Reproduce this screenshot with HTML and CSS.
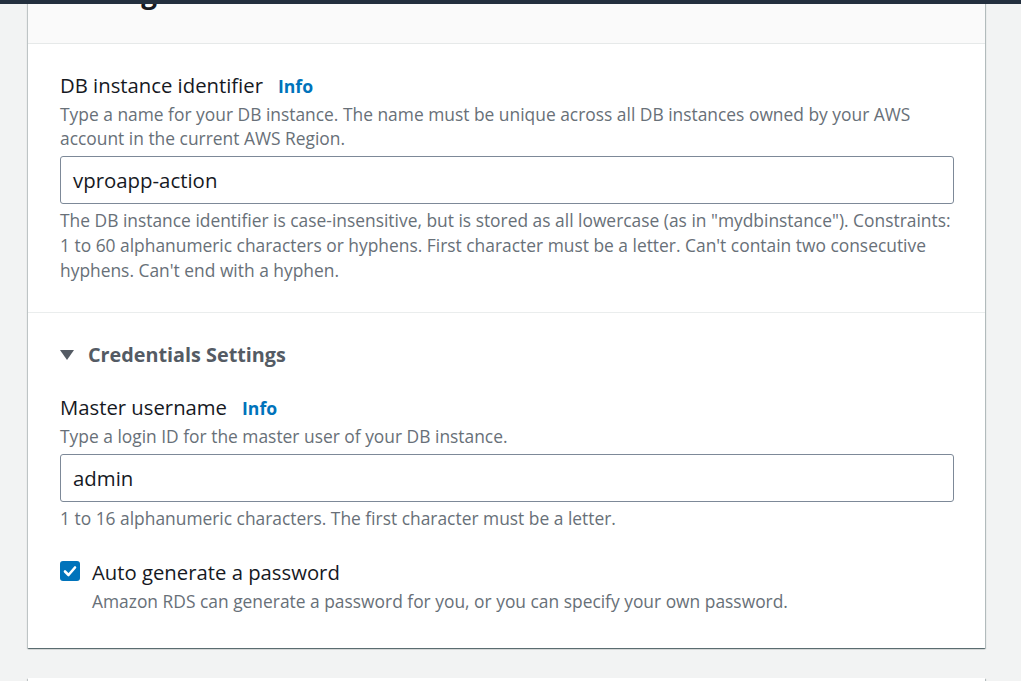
FILE: index.html
```html
<!DOCTYPE html>
<html lang="en">
<head>
<meta charset="utf-8">
<title>Settings</title>
<link rel="stylesheet" href="styles.css">
</head>
<body>
<div class="topbar"></div>
<main class="page">
  <section class="card">
    <div class="card-header">
      <h2 class="card-title">Settings</h2>
    </div>
    <div class="section">
      <div class="field">
        <div class="label-row"><span class="label">DB instance identifier</span><a class="info">Info</a></div>
        <p class="desc">Type a name for your DB instance. The name must be unique across all DB instances owned by your AWS account in the current AWS Region.</p>
        <div class="input">vproapp-action</div>
        <p class="hint">The DB instance identifier is case-insensitive, but is stored as all lowercase (as in "mydbinstance"). Constraints: 1 to 60 alphanumeric characters or hyphens. First character must be a letter. Can't contain two consecutive hyphens. Can't end with a hyphen.</p>
      </div>
    </div>
    <div class="section section-border">
      <div class="expander">
        <svg class="caret" width="14" height="12" viewBox="0 0 14 12"><polygon points="0,1 14,1 7,11" fill="#545b64"/></svg>
        <span class="expander-title">Credentials Settings</span>
      </div>
      <div class="field field-gap">
        <div class="label-row"><span class="label">Master username</span><a class="info">Info</a></div>
        <p class="desc">Type a login ID for the master user of your DB instance.</p>
        <div class="input">admin</div>
        <p class="hint">1 to 16 alphanumeric characters. The first character must be a letter.</p>
      </div>
      <div class="check-row">
        <span class="checkbox">
          <svg width="20" height="20" viewBox="0 0 20 20"><polyline points="5,10.5 8.5,14 15,6.5" fill="none" stroke="#fff" stroke-width="2.6" stroke-linecap="round" stroke-linejoin="round"/></svg>
        </span>
        <div class="check-text">
          <div class="check-label">Auto generate a password</div>
          <div class="check-desc">Amazon RDS can generate a password for you, or you can specify your own password.</div>
        </div>
      </div>
    </div>
  </section>
  <section class="card next-card"></section>
</main>
</body>
</html>
```
FILE: styles.css
```css
html, body {
  margin: 0;
  padding: 0;
}
body {
  background: #f2f3f3;
  font-family: "Open Sans", "Noto Sans", sans-serif;
  color: #16191f;
  overflow: hidden;
}
.topbar {
  position: fixed;
  top: 0;
  left: 0;
  right: 0;
  height: 4px;
  background: #232f3e;
  z-index: 10;
}
.page {
  padding: 0 36px 0 28px;
  margin-top: -30px;
}
.card {
  background: #fff;
  box-shadow: 0 1px 1px 0 rgba(0, 28, 36, 0.45), 1px 1px 1px 0 rgba(0, 28, 36, 0.2), -1px 1px 1px 0 rgba(0, 28, 36, 0.15);
}
.card-header {
  background: #fafafa;
  border-bottom: 1px solid #e6e9e9;
  padding: 10px 20px 39px 30px;
}
.card-title {
  margin: 0;
  font-size: 28px;
  line-height: 24px;
  font-weight: 700;
  color: #16191f;
}
.section {
  padding: 29px 31px 29px 32px;
}
.section-border {
  border-top: 1px solid #eaeded;
  padding-top: 30px;
  padding-bottom: 35px;
}
.label-row {
  display: flex;
  align-items: baseline;
  gap: 15px;
  line-height: 24px;
}
.label {
  font-size: 20.3px;
  color: #16191f;
}
.info {
  font-size: 17.6px;
  font-weight: 700;
  color: #0073bb;
}
.desc {
  margin: 4px 0 0;
  font-size: 17.4px;
  line-height: 24px;
  color: #687078;
}
.input {
  margin-top: 6px;
  height: 46px;
  border: 1px solid #7d8998;
  border-radius: 3px;
  padding: 0 12px;
  display: flex;
  align-items: center;
  font-size: 20.4px;
  color: #16191f;
}
.hint {
  margin: 4px 0 0;
  font-size: 17.4px;
  line-height: 25px;
  color: #687078;
}
.expander {
  display: flex;
  align-items: center;
  gap: 14px;
  line-height: 24px;
}
.caret {
  display: block;
}
.expander-title {
  font-size: 19.8px;
  font-weight: 700;
  color: #545b64;
}
.field-gap {
  margin-top: 28px;
}
.check-row {
  display: flex;
  align-items: flex-start;
  gap: 12px;
  margin-top: 29px;
}
.checkbox {
  width: 20px;
  height: 20px;
  border-radius: 3px;
  background: #0073bb;
  flex: none;
  margin-top: 1px;
}
.checkbox svg {
  display: block;
}
.check-label {
  font-size: 20.3px;
  line-height: 24px;
  color: #16191f;
}
.check-desc {
  margin-top: 5px;
  font-size: 17.4px;
  line-height: 24px;
  color: #687078;
}
.next-card {
  margin-top: 30px;
  height: 60px;
}
```
